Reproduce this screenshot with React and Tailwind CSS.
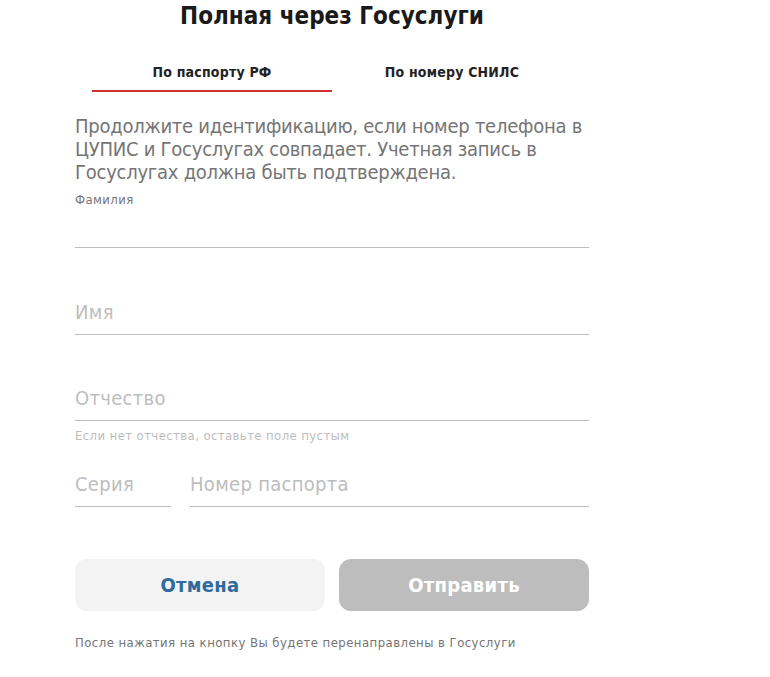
import React from 'react';

const Field = ({ label, placeholder, hint, className = '' }) => (
  <div className={`flex flex-col ${className}`}>
    <div className="h-[16px] text-[13px] leading-[16px] tracking-[0.4px] text-[#757575]">{label}</div>
    <input
      type="text"
      placeholder={placeholder}
      className="h-[40px] w-full border-b border-[#bdbdbd] bg-transparent pb-[6px] text-[20px] leading-[23px] tracking-[0.3px] text-[#333] outline-none placeholder:text-[#bdbdbd]"
    />
    <div className="h-[30px] pt-[7px] text-[13px] leading-[16px] tracking-[0.4px] text-[#bdbdbd]">{hint}</div>
  </div>
);

const App = () => {
  return (
    <div className="min-h-screen bg-white pl-[75px] font-['DejaVu_Sans_Condensed','DejaVu_Sans',sans-serif]">
      <div className="w-[514px]">
        {/* заголовок */}
        <h1 className="text-center text-[24px] font-bold leading-8 text-[#1a1a1a]">Полная через Госуслуги</h1>

        {/* табы */}
        <div className="mx-[17px] mt-[22px] flex">
          <button className="flex-1 border-b-2 border-[#d32f2f] py-[10px] text-[14px] font-bold leading-4 tracking-[0.2px] text-[#222]">
            По паспорту РФ
          </button>
          <button className="flex-1 border-b-2 border-transparent py-[10px] text-[14px] font-bold leading-4 tracking-[0.2px] text-[#222]">
            По номеру СНИЛС
          </button>
        </div>

        <p className="mt-[23px] text-[20px] leading-[23px] tracking-[-0.25px] text-[#757575]">
          Продолжите идентификацию, если номер телефона в ЦУПИС и Госуслугах совпадает. Учетная запись в Госуслугах должна быть подтверждена.
        </p>

        {/* поля */}
        <div className="mt-[8px] flex flex-col">
          <Field label="Фамилия" />
          <Field placeholder="Имя" className="mt-[1px]" />
          <Field placeholder="Отчество" hint="Если нет отчества, оставьте поле пустым" />
          <div className="flex gap-[19px]">
            <Field placeholder="Серия" className="w-[96px]" />
            <Field placeholder="Номер паспорта" className="flex-1" />
          </div>
        </div>

        {/* кнопки */}
        <div className="mt-[22px] flex gap-[14px]">
          <button className="h-[52px] flex-1 rounded-[12px] bg-[#f3f3f3] text-[20px] font-bold tracking-[0.3px] text-[#2f6b9e]">Отмена</button>
          <button className="h-[52px] flex-1 rounded-[12px] bg-[#bdbdbd] text-[20px] font-bold tracking-[0.3px] text-white">Отправить</button>
        </div>

        <p className="mt-[24px] text-[13px] leading-4 tracking-[0.45px] text-[#757575]">После нажатия на кнопку Вы будете перенаправлены в Госуслуги</p>
      </div>
    </div>
  );
};

export default App;
